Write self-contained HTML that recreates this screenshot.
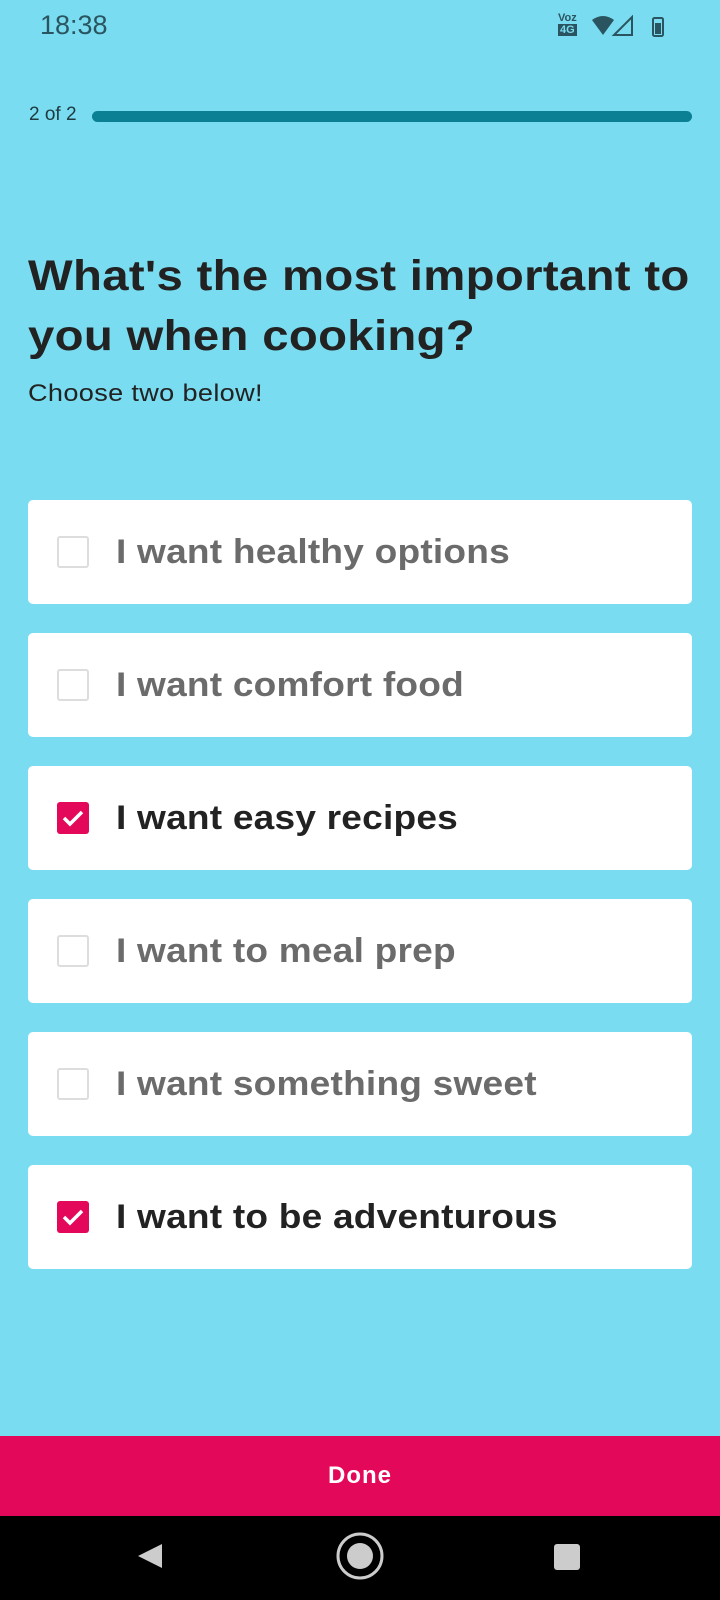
<!DOCTYPE html>
<html><head><style>
body{margin:0;width:720px;height:1600px;background:#79dcf0;font-family:"Liberation Sans",sans-serif;position:relative;overflow:hidden}
.t{position:absolute}
.card{position:absolute;left:28px;width:664px;height:104px;background:#fff;border-radius:5px}
.cb{position:absolute;left:29px;top:36px;border:2px solid #ddd;border-radius:3px;box-sizing:border-box;width:32px;height:32px}
.cb.on{background:#e4085a;border:none}
.lbl{position:absolute;left:88px;top:0;line-height:104px;font-size:34px;font-weight:bold;color:#6b6b6b;letter-spacing:0.2px;white-space:nowrap;transform:scaleX(1.09);transform-origin:left center}
.on+.lbl{color:#222}
</style></head><body>
<div class="t" style="left:40px;top:10px;font-size:27px;color:#2a5560">18:38</div>
<div class="t" style="left:558px;top:12px;font-size:11px;font-weight:bold;color:#2a5560;line-height:12px">Voz<br><span style="background:#2a5560;color:#79dcf0;padding:0 2px">4G</span></div>
<svg class="t" style="left:590px;top:14px" width="80" height="24"><path d="M2 6 Q13 -2 24 6 L13 21Z" fill="#2a5560"/><path d="M42 3 L42 21 L24 21Z" fill="none" stroke="#2a5560" stroke-width="2"/><rect x="63" y="4" width="10" height="18" rx="1.5" fill="none" stroke="#2a5560" stroke-width="2"/><rect x="65" y="9" width="6" height="11" fill="#2a5560"/></svg>
<div class="t" style="left:29px;top:104px;font-size:19px;color:#1e3a40">2 of 2</div>
<div class="t" style="left:92px;top:111px;width:600px;height:11px;border-radius:6px;background:#0b7f93"></div>
<div class="t" style="left:28px;top:246px;font-size:43px;font-weight:bold;color:#222;line-height:60px;letter-spacing:0.3px;white-space:nowrap;transform:scaleX(1.1);transform-origin:left top">What's the most important to<br>you when cooking?</div>
<div class="t" style="left:28px;top:380px;font-size:24px;color:#222;letter-spacing:0.3px;white-space:nowrap;transform:scaleX(1.13);transform-origin:left top">Choose two below!</div>

<div class="card" style="top:500px"><div class="cb"></div><div class="lbl">I want healthy options</div></div>
<div class="card" style="top:633px"><div class="cb"></div><div class="lbl">I want comfort food</div></div>
<div class="card" style="top:766px"><div class="cb on"><svg width="32" height="32"><path d="M7 16 L13 22 L25 10" fill="none" stroke="#fff" stroke-width="3.5"/></svg></div><div class="lbl">I want easy recipes</div></div>
<div class="card" style="top:899px"><div class="cb"></div><div class="lbl">I want to meal prep</div></div>
<div class="card" style="top:1032px"><div class="cb"></div><div class="lbl">I want something sweet</div></div>
<div class="card" style="top:1165px"><div class="cb on"><svg width="32" height="32"><path d="M7 16 L13 22 L25 10" fill="none" stroke="#fff" stroke-width="3.5"/></svg></div><div class="lbl">I want to be adventurous</div></div>

<div class="t" style="left:0;top:1436px;width:720px;height:80px;background:#e4085a;color:#fff;font-size:24px;font-weight:bold;text-align:center;line-height:80px;letter-spacing:1px">Done</div>
<div class="t" style="left:0;top:1516px;width:720px;height:84px;background:#000"></div>
<svg class="t" style="left:0;top:1516px" width="720" height="84"><path d="M162 28 L162 52 L138 40Z" fill="#ccc"/><circle cx="360" cy="40" r="22" fill="none" stroke="#ccc" stroke-width="3"/><circle cx="360" cy="40" r="13" fill="#ccc"/><rect x="554" y="28" width="26" height="26" rx="3" fill="#ccc"/></svg>
</body></html>
